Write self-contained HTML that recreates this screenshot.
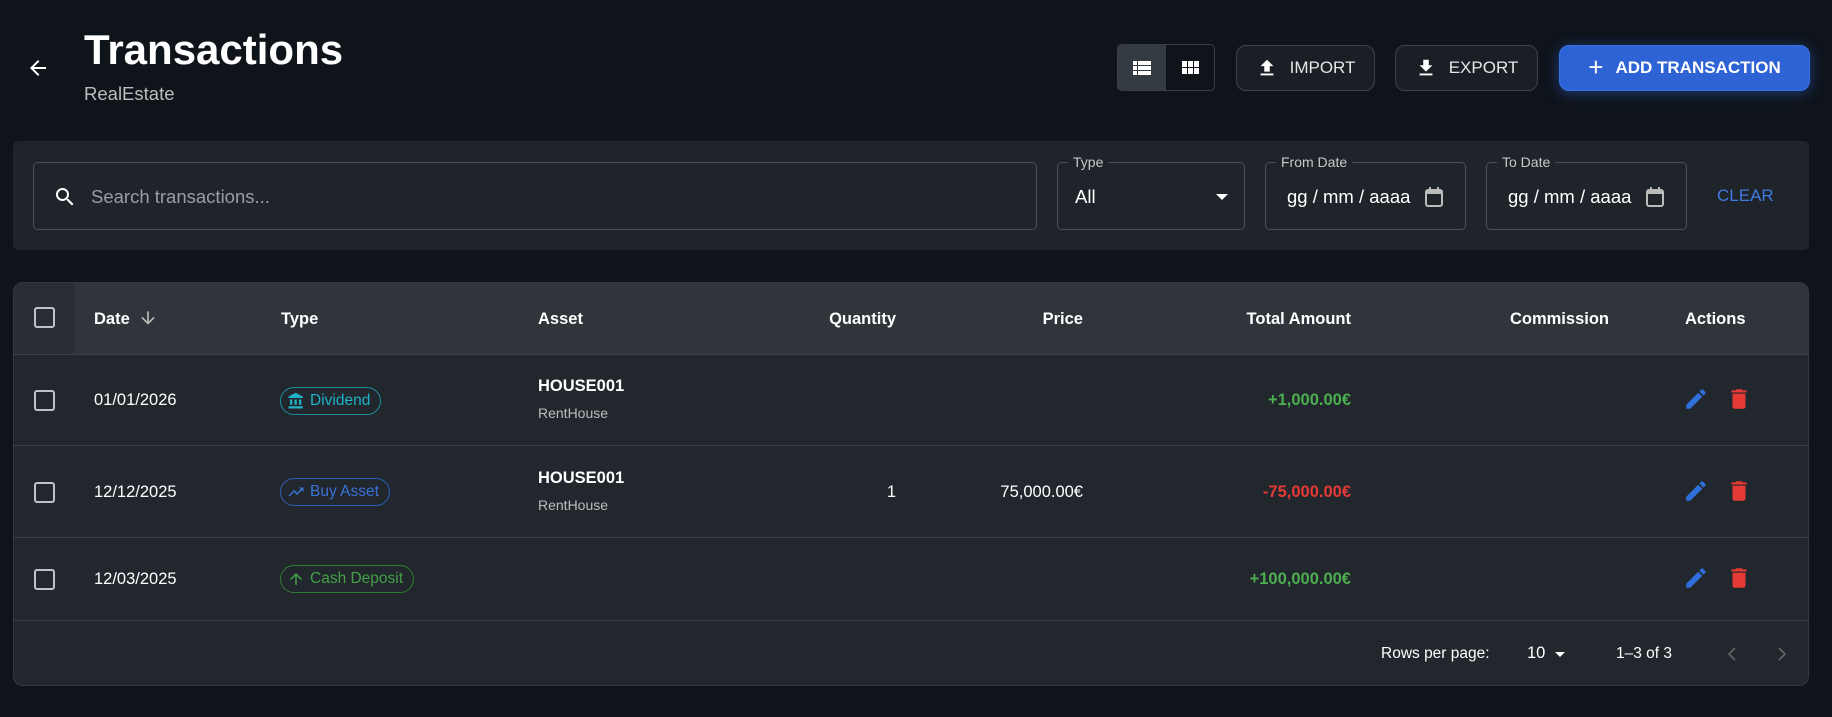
<!DOCTYPE html>
<html><head><meta charset="utf-8"><style>
*{box-sizing:border-box;margin:0;padding:0}
body{width:1832px;height:717px;background:#0f141b;font-family:"Liberation Sans",sans-serif;color:#fff;position:relative;overflow:hidden}
.abs{position:absolute}
.btn{position:absolute;top:45px;height:46px;border:1px solid #3e434b;border-radius:10px;background:#1a1e25;color:#e6e6e6;font-size:17px;display:flex;align-items:center;justify-content:center;gap:12px}
.field{position:absolute;top:162px;height:68px;border:1px solid #4a4f57;border-radius:5px}
.lbl{position:absolute;top:-9px;left:10px;background:#1f232a;padding:0 5px;font-size:14px;color:#c8c8c8}
.th{position:absolute;top:310px;font-size:16.5px;font-weight:bold}
.cb{position:absolute;left:34px;width:21px;height:21px;border:2px solid #bfc3c8;border-radius:3px}
.td{position:absolute;font-size:16.5px}
.chip{position:absolute;left:280px;height:28px;border:1px solid;border-radius:14px;font-size:15.5px;display:flex;align-items:center;padding:0 10px 0 6px;gap:5px}
.line{position:absolute;left:13px;width:1796px;height:1px;background:#3c4048}
</style></head><body>
<svg class="abs" style="left:26px;top:56px" width="24" height="24" viewBox="0 0 24 24"><path d="M20 11H7.83l5.59-5.59L12 4l-8 8 8 8 1.41-1.41L7.83 13H20z" fill="#fff"/></svg>
<div class="abs" style="left:84px;top:26px;font-size:42px;font-weight:bold">Transactions</div>
<div class="abs" style="left:84px;top:83px;font-size:18.5px;color:#bdbdbd">RealEstate</div>

<div class="abs" style="left:1117px;top:44px;width:98px;height:47px;border:1px solid #3a3f47;border-radius:5px;overflow:hidden;display:flex">
<div style="width:49px;background:#343a42;display:flex;align-items:center;justify-content:center"><svg width="24" height="24" viewBox="0 0 24 24"><path d="M3 14h4v-4H3v4zm0 5h4v-4H3v4zM3 9h4V5H3v4zm5 5h13v-4H8v4zm0 5h13v-4H8v4zM8 5v4h13V5H8z" fill="#fff"/></svg></div>
<div style="width:49px;background:#10141a;display:flex;align-items:center;justify-content:center"><svg width="24" height="24" viewBox="0 0 24 24"><path d="M4 11h5V5H4v6zm0 7h5v-6H4v6zm6 0h5v-6h-5v6zm6 0h5v-6h-5v6zm-6-7h5V5h-5v6zm6-6v6h5V5h-5z" fill="#fff"/></svg></div>
</div>
<div class="btn" style="left:1236px;width:139px"><svg width="22" height="22" viewBox="0 0 24 24"><path d="M9 16h6v-6h4l-7-7-7 7h4zm-4 2h14v2H5z" fill="#fff"/></svg>IMPORT</div>
<div class="btn" style="left:1395px;width:143px"><svg width="22" height="22" viewBox="0 0 24 24"><path d="M19 9h-4V3H9v6H5l7 7 7-7zM5 18v2h14v-2H5z" fill="#fff"/></svg>EXPORT</div>
<div class="btn" style="left:1559px;width:251px;background:#2d63d4;border-color:#3a70e0;color:#fff;font-weight:bold;box-shadow:0 2px 14px rgba(45,99,212,.5)"><span style="font-size:26px;font-weight:normal;line-height:1;margin-top:-3px">+</span>ADD TRANSACTION</div>

<div class="abs" style="left:13px;top:141px;width:1796px;height:109px;background:#1f232a;border-radius:5px"></div>
<div class="field" style="left:33px;width:1004px"><svg class="abs" style="left:19px;top:22px" width="24" height="24" viewBox="0 0 24 24"><path d="M15.5 14h-.79l-.28-.27A6.47 6.47 0 0016 9.5 6.5 6.5 0 109.5 16c1.61 0 3.090-.59 4.23-1.57l.27.28v.79l5 4.99L20.49 19l-4.99-5zm-6 0C7.01 14 5 11.990 5 9.5S7.01 5 9.5 5 14 7.01 14 9.5 11.99 14 9.5 14z" fill="#fff"/></svg><div class="abs" style="left:57px;top:23px;font-size:18.5px;color:#9a9ea4">Search transactions...</div></div>
<div class="field" style="left:1057px;width:188px"><div class="lbl">Type</div><div class="abs" style="left:17px;top:23px;font-size:18.5px">All</div><div class="abs" style="left:158px;top:31px;border-left:6px solid transparent;border-right:6px solid transparent;border-top:6px solid #fff"></div></div>
<div class="field" style="left:1265px;width:201px"><div class="lbl">From Date</div><div class="abs" style="left:21px;top:23px;font-size:18.5px">gg / mm / aaaa</div><svg class="abs" style="left:157px;top:22px" width="22" height="24" viewBox="0 0 22 24"><rect x="3" y="5" width="16" height="16" rx="2" fill="none" stroke="#bbb" stroke-width="2"/><rect x="3" y="5" width="16" height="4" fill="#bbb"/><rect x="6" y="2" width="2" height="4" fill="#bbb"/><rect x="14" y="2" width="2" height="4" fill="#bbb"/></svg></div>
<div class="field" style="left:1486px;width:201px"><div class="lbl">To Date</div><div class="abs" style="left:21px;top:23px;font-size:18.5px">gg / mm / aaaa</div><svg class="abs" style="left:157px;top:22px" width="22" height="24" viewBox="0 0 22 24"><rect x="3" y="5" width="16" height="16" rx="2" fill="none" stroke="#bbb" stroke-width="2"/><rect x="3" y="5" width="16" height="4" fill="#bbb"/><rect x="6" y="2" width="2" height="4" fill="#bbb"/><rect x="14" y="2" width="2" height="4" fill="#bbb"/></svg></div>
<div class="abs" style="left:1717px;top:186px;font-size:17px;color:#3f7be0">CLEAR</div>

<div class="abs" style="left:13px;top:282px;width:1796px;height:404px;background:#22262d;border-radius:10px;border:1px solid #333840;overflow:hidden">
<div style="height:72px;background:#30353c;position:relative"><div style="position:absolute;left:0;top:0;width:60px;height:72px;background:#2a2e34"></div></div>
</div>
<div class="line" style="top:354px"></div>
<div class="line" style="top:445px"></div>
<div class="line" style="top:537px"></div>
<div class="line" style="top:620px"></div>

<div class="cb" style="top:307px"></div>
<div class="th" style="left:94px">Date</div>
<svg class="abs" style="left:138px;top:308px" width="20" height="20" viewBox="0 0 24 24"><path d="M20 12l-1.41-1.41L13 16.17V4h-2v12.17l-5.58-5.59L4 12l8 8 8-8z" fill="#bbb"/></svg>
<div class="th" style="left:281px">Type</div>
<div class="th" style="left:538px">Asset</div>
<div class="th" style="left:796px;width:100px;text-align:right">Quantity</div>
<div class="th" style="left:983px;width:100px;text-align:right">Price</div>
<div class="th" style="left:1151px;width:200px;text-align:right">Total Amount</div>
<div class="th" style="left:1409px;width:200px;text-align:right">Commission</div>
<div class="th" style="left:1685px">Actions</div>

<div class="cb" style="top:390px"></div>
<div class="td" style="left:94px;top:391px">01/01/2026</div>
<div class="chip" style="top:387px;color:#1fb3c8;border-color:#1c8fa0"><svg width="18" height="18" viewBox="0 0 24 24"><path d="M4 10v7h3v-7H4zm6 0v7h3v-7h-3zM2 22h19v-3H2v3zm14-12v7h3v-7h-3zm-4.5-9L2 6v2h19V6l-9.5-5z" fill="#1fb3c8"/></svg>Dividend</div>
<div class="td" style="left:538px;top:377px;font-weight:bold">HOUSE001</div>
<div class="td" style="left:538px;top:405px;font-size:14px;color:#bcbcbc">RentHouse</div>
<div class="td" style="left:1151px;top:391px;width:200px;text-align:right;color:#4caf50;font-weight:bold">+1,000.00€</div>

<div class="cb" style="top:482px"></div>
<div class="td" style="left:94px;top:483px">12/12/2025</div>
<div class="chip" style="top:478px;color:#3a73d8;border-color:#2d5fb8"><svg width="18" height="18" viewBox="0 0 24 24"><path d="M16 6l2.29 2.29-4.88 4.88-4-4L2 16.59 3.41 18l6-6 4 4 6.3-6.29L22 12V6z" fill="#3a73d8"/></svg>Buy Asset</div>
<div class="td" style="left:538px;top:469px;font-weight:bold">HOUSE001</div>
<div class="td" style="left:538px;top:497px;font-size:14px;color:#bcbcbc">RentHouse</div>
<div class="td" style="left:796px;top:483px;width:100px;text-align:right">1</div>
<div class="td" style="left:900px;top:483px;width:183px;text-align:right">75,000.00€</div>
<div class="td" style="left:1151px;top:483px;width:200px;text-align:right;color:#e53935;font-weight:bold">-75,000.00€</div>

<div class="cb" style="top:569px"></div>
<div class="td" style="left:94px;top:570px">12/03/2025</div>
<div class="chip" style="top:565px;color:#43a047;border-color:#2e7d32"><svg width="18" height="18" viewBox="0 0 24 24"><path d="M4 12l1.41 1.41L11 7.83V20h2V7.83l5.58 5.59L20 12l-8-8-8 8z" fill="#43a047"/></svg>Cash Deposit</div>
<div class="td" style="left:1151px;top:570px;width:200px;text-align:right;color:#4caf50;font-weight:bold">+100,000.00€</div>

<svg class="abs" style="left:1683px;top:386px" width="26" height="26" viewBox="0 0 24 24"><path d="M3 17.25V21h3.75L17.81 9.94l-3.75-3.75L3 17.25zM20.71 7.04a1 1 0 000-1.41l-2.34-2.34a1 1 0 00-1.41 0l-1.830 1.83 3.75 3.75 1.83-1.83z" fill="#2f6fdc"/></svg>
<svg class="abs" style="left:1726px;top:386px" width="26" height="26" viewBox="0 0 24 24"><path d="M6 19c0 1.1.9 2 2 2h8c1.1 0 2-.9 2-2V7H6v12zM19 4h-3.5l-1-1h-5l-1 1H5v2h14V4z" fill="#e53935"/></svg>
<svg class="abs" style="left:1683px;top:478px" width="26" height="26" viewBox="0 0 24 24"><path d="M3 17.25V21h3.75L17.81 9.94l-3.75-3.75L3 17.25zM20.71 7.04a1 1 0 000-1.41l-2.34-2.34a1 1 0 00-1.41 0l-1.83 1.83 3.75 3.75 1.83-1.83z" fill="#2f6fdc"/></svg>
<svg class="abs" style="left:1726px;top:478px" width="26" height="26" viewBox="0 0 24 24"><path d="M6 19c0 1.1.9 2 2 2h8c1.1 0 2-.9 2-2V7H6v12zM19 4h-3.5l-1-1h-5l-1 1H5v2h14V4z" fill="#e53935"/></svg>
<svg class="abs" style="left:1683px;top:565px" width="26" height="26" viewBox="0 0 24 24"><path d="M3 17.25V21h3.75L17.81 9.94l-3.75-3.75L3 17.25zM20.71 7.04a1 1 0 000-1.41l-2.34-2.34a1 1 0 00-1.41 0l-1.83 1.83 3.75 3.75 1.83-1.83z" fill="#2f6fdc"/></svg>
<svg class="abs" style="left:1726px;top:565px" width="26" height="26" viewBox="0 0 24 24"><path d="M6 19c0 1.1.9 2 2 2h8c1.1 0 2-.9 2-2V7H6v12zM19 4h-3.5l-1-1h-5l-1 1H5v2h14V4z" fill="#e53935"/></svg>

<div class="td" style="left:1381px;top:645px;font-size:15.5px">Rows per page:</div>
<div class="td" style="left:1527px;top:644px">10</div>
<div class="abs" style="left:1555px;top:652px;border-left:5px solid transparent;border-right:5px solid transparent;border-top:5px solid #fff"></div>
<div class="td" style="left:1616px;top:645px;font-size:15.5px">1–3 of 3</div>
<svg class="abs" style="left:1720px;top:642px" width="24" height="24" viewBox="0 0 24 24"><path d="M15 6l-6 6 6 6" fill="none" stroke="#666" stroke-width="1.6"/></svg>
<svg class="abs" style="left:1770px;top:642px" width="24" height="24" viewBox="0 0 24 24"><path d="M9 6l6 6-6 6" fill="none" stroke="#666" stroke-width="1.6"/></svg>
</body></html>
